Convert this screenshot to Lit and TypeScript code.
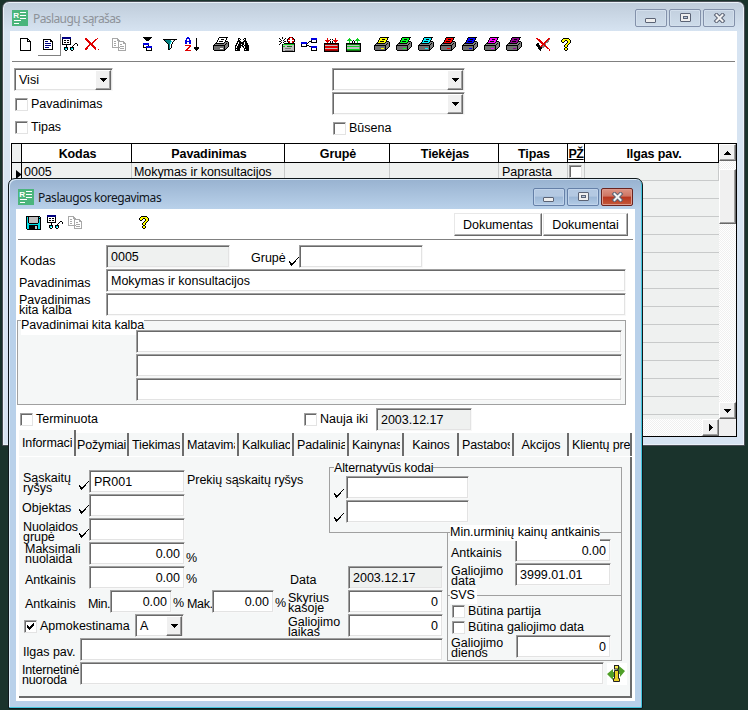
import { LitElement, html, css, svg, nothing } from "lit";
import { customElement, property } from "lit/decorators.js";

const PALETTE: Record<string, string> = {
  k: "#000000", w: "#ffffff", g: "#808080", s: "#c0c0c0", l: "#a8a8a8", n: "#000080", b: "#0000e0",
  r: "#e00000", d: "#900000", c: "#00e0e8", t: "#008080", y: "#ffff00", G: "#10d020", e: "#107010",
  a: "#707070",
};

const PRINTER = [
  "......kkkkkkkkk.",
  ".....kpppppppk..",
  ".....kppkkkppk..",
  "....kpppppppk...",
  "....kpkkkkppkkk.",
  "...kpppppppkgggk",
  "..kkkkkkkkkggkgk",
  ".kggggggggggkggk",
  "kkkkkkkkkkkkgggk",
  "kaaaaaaaaaakgggk",
  "kaaaaaaaaaakggk.",
  "kaaaaaapppakgk..",
  "kaaaaaaaaaakk...",
  ".kkkkkkkkkkk....",
];

const ICONS: Record<string, string[]> = {
  page: [
    "................",
    "kkkkkkkk........", "kwwwwwwkk.......", "kwwwwwwkwk......", "kwwwwwwkkkk.....", "kwwwwwwwwwk.....",
    "kwwwwwwwwwk.....", "kwwwwwwwwwk.....", "kwwwwwwwwwk.....", "kwwwwwwwwwk.....", "kwwwwwwwwwk.....",
    "kwwwwwwwwwk.....", "kwwwwwwwwwk.....", "kkkkkkkkkkk.....",
  ],
  list: [
    "................", "................",
    "kkkkkkkk........", "kwwwwwwkk.......", "kwnnnwwkkk......", "kwwwwwwwwk......", "kwnnnnnnwk......",
    "kwwwwwwwwk......", "kwnnnnnnwk......", "kwwwwwwwwk......", "kwnnnnwwwk......", "kwwwwwwwwk......", "kkkkkkkkkk......",
  ],
  view: [
    "nnnnnnnnn.......", "nnnnnnnnn.......", "kwwwwwwwk.......", "kwkkwkkwk.......", "kwwwwwwwk.......",
    "kwkkwkkwk.......", "kwwwwwwwk....kk.", "kkkkkkkkk...k..k", "....k......k...k", "....k.....k.....",
    "..kkkk..kkkk....", "..kcck..kcck....", "..kcwk..kcwk....", "...kk....kk.....",
  ],
  cross: [
    "................",
    "rr..........r...", "rrr.......rr....", ".rrr.....rr.....", "..rrr...rr......", "...rrr.rr.......", "....rrrr........",
    "....rrrr........", "...rr.rrr.......", "..rr...rrr......", ".rr.....rrr.....", "rrr......rr.....", "rr........r..r..",
  ],
  copy: [
    "................",
    "llllll..........", "lwwwwll.........", "lwwwwlll........", "lwllwwllllll....", "lwwwwwlwwwwll...", "lwllwwlwwwwlll..",
    "lwwwwwlwllwwwl..", "lwllwwlwwwwwwl..", "lwwwwwlwllllwl..", "llllllllwwwwwl..", "......lwllllwl..", "......lwwwwwwl..", "......llllllll..",
  ],
  copyTo: [
    "kkkkkkkkk.......", ".kkkkkkk........", "..kkkkk.........", "...kkk..........", "................", "................",
    "bbbbbb..........", "bbbbbb..........", "kwwwwk..........", "kwwbbbbbb.......", "kkkbbbbbb.......", "...kwwwwk.......", "...kwwwwk.......", "...kkkkkk.......",
  ],
  funnel: [
    "................", "................",
    "kkkkkkkkkkkkkk..", ".kttttttwwsk....", "..ktttttcwk.....", "...ktttcwk......", "....kttcwk......", ".....ktwk.......",
    ".....ktwk.......", ".....ktwk.......", ".....ktwk.......", ".....ktk........", ".....kk.........",
  ],
  sort: [
    "..bb............", ".bbbb......k....", ".b..b......k....", "bb..bb.....k....", "bbbbbb.....k....", "bb..bb.....k....", "bb..bb.....k....",
    "...........k....", "rrrrrr.....k....", "....rr.....k....", "...rr....kkkkk..", "..rr.....kkkkk..", ".rr.......kkk...", "rrrrrr.....k....",
  ],
  binoculars: [
    "................", "...kk....kk.....", "...kwk..kwk.....", "...kk....kk.....", "..kkkk..kkkk....", "..kwkkkkkwkk....",
    ".kkwkkkkkwkkk...", ".kwkkkwkkwkkk...", "kkwkkkkkwkkkkk..", "kwkkkk.kkwkkkk..", "kwkkkk..kwkkkk..", "kkkkk....kkkkk..", "kwkkk....kwkkk..", "kkkkk....kkkkk..",
  ],
  fresh: [
    "...k......krrk..", "k..k..k..krwwrk.", ".k...k..krrwwrrk", "..k.k...kwwwwwwk", "kk...kk.krrwwrrk", "..k.k....krwwrk.", ".k...kkkkkkkkkkk",
    "k..kGGGGGGGGGGGk", "...ksssssssssssk", "...kGGsseeeeessk", "...ksssssssssssk", "...kssggggggsssk", "...ksssssssssssk", "...kssggggggggsk", "...kkkkkkkkkkkkk",
  ],
  tree: [
    "................",
    "..........bbbbbb", "..........bbbbbb", "..........kwwwwk", "........kkkwwwwk", "bbbbbb.k..kkkkkk", "bbbbbbk.........",
    "kwwwwk..........", "kwwwwkkk........", "kkkkkk..kkbbbbbb", "..........bbbbbb", "..........kwwwwk", "..........kwwwwk", "..........kkkkkk",
  ],
  boxIn: [
    "................", "...r.......r....", "...r..k.k..r....", ".rrrrr...rrrrr..", "..rrr.k.k.rrr...", "...r..k.k..r....", "kkkkkkkkkkkkkkk.",
    "kdddddddddddddk.", "kssssssssssssgk.", "krrrrrrrrrrrrrk.", "krrrrrrrrrrrrrk.", "kssssssssssssgk.", "krrrrrrrrrrrrrk.", "kdddddddddddddk.", "kkkkkkkkkkkkkkk.",
  ],
  boxOut: [
    "................", "...G.......G....", "..GGG.....GGG...", ".GGGGG.k.GGGGG..", "...G..k.k..G....", "...G..k.k..G....", "kkkkkkkkkkkkkkk.",
    "keeeeeeeeeeeeek.", "kssssssssssssgk.", "kGGGGGGGGGGGGGk.", "kssssssssssssgk.", "kssssssssssssgk.", "kGGGGGGGGGGGGGk.", "keeeeeeeeeeeeek.", "kkkkkkkkkkkkkkk.",
  ],
  uncheck: [
    "................",
    "rr..........rr..", ".rrr.......rrg..", "..rrr.....rrg...", "...rrr...rrgg...", "....rrr.rrgg....", ".kk..rrrrg......",
    "kkk...rrrg......", "kkkk.rrgrr......", ".kkkrrgggrr.....", "..kkkkgg..rr....", "..kkkk.....rr...", "...kk........r..", "....k........r..",
  ],
  help: [
    "................",
    "..kkkkkk........", ".kyyyyyyk.......", "kyyykkyyyk......", "kyyk..kyyk......", ".kk...kyyk......", ".....kyyk.......",
    "....kyyk........", "...kyyk.........", "...kyyk.........", "....kk..........", "...kyyk.........", "...kyyk.........", "....kk..........",
  ],
  save: [
    "................",
    "kkkkkkkkkkkkkk..", "kckssssssssskck.", "kckssssssssskkk.", "kckssssssssskck.", "kckssssssssskck.", "kckssssssssskck.", "kckssssssssskck.",
    "kcckkkkkkkkkcck.", "kccccccccccccck.", "kcckkkkkkkkkcck.", "kcckkkkkksskcck.", "kcckkkkkksskcck.", "kcckkkkkksskcck.", ".kkkkkkkkkkkkkk.",
  ],
  tick: [
    ".........k", "........k.", ".......k..", "......k...", "k....kk...", "kk..kk....", ".kkkk.....", ".kkk......", "..k.......",
  ],
};

function pixels(rows: string[], ink = "") {
  const out: unknown[] = [];
  rows.forEach((row, y) => {
    let x = 0;
    while (x < row.length) {
      let end = x + 1;
      while (end < row.length && row[end] === row[x]) end++;
      if (row[x] !== ".") {
        const fill = row[x] === "p" ? ink : PALETTE[row[x]];
        out.push(svg`<rect x=${x} y=${y} width=${end - x} height="1" fill=${fill}></rect>`);
      }
      x = end;
    }
  });
  return out;
}

@customElement("pixel-icon")
class PixelIcon extends LitElement {
  @property() name = "page";
  @property() ink = "";
  static styles = css`
    :host { display: block; flex: none; width: 16px; height: 16px; }
    :host([name="tick"]) { width: 10px; height: 9px; }
    svg { display: block; }
  `;
  render() {
    const rows = this.name === "printer" ? PRINTER : ICONS[this.name];
    const w = this.name === "tick" ? 10 : 16;
    const h = this.name === "tick" ? 9 : 16;
    return html`<svg width=${w} height=${h} viewBox="0 0 ${w} ${h}" shape-rendering="crispEdges">${pixels(rows, this.ink)}</svg>`;
  }
}

@customElement("title-bar")
class TitleBar extends LitElement {
  @property() label = "";
  @property({ type: Boolean, reflect: true }) active = false;
  static styles = css`
    :host { display: flex; flex: none; height: 29px; }
    .logo { margin: 8px 0 0 2px; width: 16px; height: 16px; flex: none; display: block; }
    .name { margin: 9px 0 0 5px; flex: 1; font: 12px/16px "Noto Sans", sans-serif; letter-spacing: -0.6px; color: #8d9299; white-space: nowrap; }
    .buttons { display: flex; gap: 2px; margin: 7px 2px 0 0; }
    .btn { box-sizing: border-box; width: 32px; height: 18px; border: 1px solid #8391aa; border-radius: 2px; box-shadow: inset 0 0 0 1px #d3dfec; display: grid; place-items: center; background: linear-gradient(#c3d0df, #cedcea); }
    :host([active]) .name { color: #10151c; letter-spacing: -0.45px; margin-left: 4px; }
    :host([active]) .logo { margin-top: 9px; }
    :host([active]) .name { margin-top: 10px; }
    :host([active]) .buttons { margin-top: 8px; }
    :host([active]) .btn { border-color: #6580a8; box-shadow: inset 0 0 0 1px #c0d3ea; background: linear-gradient(#b4c9e2 45%, #9cb7d6 50%, #b4cce6); }
    :host([active]) .close { border-color: #6b2420; box-shadow: inset 0 0 0 1px #dd9a8c; background: linear-gradient(#dc9384 0, #cf7563 45%, #b8351f 50%, #c45a3a); }
    svg { display: block; }
  `;
  render() {
    return html`
      <svg class="logo" viewBox="0 0 16 16">
        <rect width="16" height="16" fill="#4bb57c"></rect>
        <text x="1.3" y="8" fill="#fff" font-family="Liberation Sans, sans-serif" font-weight="bold" font-size="8">R</text>
        <path d="M8 2.5h6M8 5.5h6M8 8.500h6M2 10.5h7M2 13.5h5" stroke="#fff" stroke-width="1"></path>
      </svg>
      <span class="name">${this.label}</span>
      <div class="buttons">
        <span class="btn"><svg width="12" height="12"><rect x="0.5" y="6.5" width="10" height="4" rx="0.5" fill="#eee" stroke="#5b6375"></rect></svg></span>
        <span class="btn"><svg width="12" height="10"><rect x="1.5" y="0.5" width="10" height="8" rx="0.5" fill="#eee" stroke="#5b6375"></rect><rect x="4.500" y="3.5" width="4" height="2" fill="#b8c8dc" stroke="#5b6375"></rect></svg></span>
        <span class="btn close"><svg width="13" height="10"><path d="M3.500 2l6 6M9.500 2l-6 6" stroke="#5b6375" stroke-width="4" stroke-linecap="square"></path><path d="M3.500 2l6 6M9.500 2l-6 6" stroke="#f2f2f2" stroke-width="2" stroke-linecap="square"></path></svg></span>
      </div>
    `;
  }
}

const PRINTER_INKS = ["#ffff00", "#00ff20", "#00f0ff", "#ff0000", "#0000ff", "#ff00ff", "#900090"];
const COLUMNS = ["Kodas", "Pavadinimas", "Grupė", "Tiekėjas", "Tipas", "PŽ", "Ilgas pav."];
const FIRST_ROW = ["0005", "Mokymas ir konsultacijos", "", "", "Paprasta", "box", ""];
const TABS = ["Informaci", "Požymiai", "Tiekimas", "Matavimai", "Kalkuliacija", "Padaliniai", "Kainynas", "Kainos", "Pastabos", "Akcijos", "Klientų pre"];
const CENTERED = new Set(["Kainos", "Akcijos"]);

@customElement("app-root")
class AppRoot extends LitElement {
  static styles = css`
    :host { display: block; position: relative; width: 748px; height: 710px; overflow: hidden; background: #1a332c; font: 12.5px/14px "Liberation Sans", Arial, sans-serif; color: #000; }
    * { box-sizing: border-box; }
    .window { position: absolute; display: flex; flex-direction: column; }
    .back { left: 2px; top: 1px; width: 743px; height: 445px; padding: 0 7px 8px; border: 1px solid #4a4f56; border-radius: 7px 7px 0 0; background: linear-gradient(#bfccda, #d7e4f2 30px); box-shadow: inset 0 0 0 1px #eaf1f8; }
    .front { left: 8px; top: 178px; width: 635px; height: 531px; padding: 1px 7px 7px; border: 1px solid #10181c; border-radius: 7px 7px 2px 2px; background: linear-gradient(#98b2d0, #b9d1ea 30px); box-shadow: inset -1px -1px 0 #42c6dc, inset 1px 1px 0 #dcebf8; }
    .client { flex: 1; min-height: 0; background: #fff; display: flex; flex-direction: column; }
    .bar { display: flex; height: 31px; flex: none; margin: 0 2px; border-bottom: 1px solid #808080; padding-top: 6px; }
    .s8 { margin-left: 8px; } .s5 { margin-left: 5px; }
    .gap { flex: 1; }

    .field { display: block; flex: none; height: 23px; background: #fff; padding: 4px 4px 0 4px; border: 1px solid; border-color: #a0a0a0 #f8f8f8 #f8f8f8 #a0a0a0; box-shadow: inset 1px 1px 0 #696969, inset -1px -1px 0 #e3e3e3; white-space: nowrap; }
    .gray { background: #eff1f0; }
    .num { text-align: right; }
    .combo { display: flex; justify-content: space-between; padding: 2px 1px 0 4px; }
    .combo .txt { margin-top: 2px; }
    .arrow { width: 16px; height: 20px; flex: none; margin-top: -1px; background: #f0f0f0; border: 1px solid; border-color: #fff #696969 #696969 #fff; box-shadow: inset -1px -1px 0 #a0a0a0; display: grid; place-items: center; }
    .arrow svg { display: block; }
    .check { display: flex; align-items: center; gap: 3px; height: 14px; white-space: nowrap; }
    .box { width: 13px; height: 13px; flex: none; background: #fff; border: 1px solid; border-color: #a0a0a0 #e3e3e3 #e3e3e3 #a0a0a0; box-shadow: inset 1px 1px 0 #696969; display: block; }

    .filters { display: flex; margin: 6px 0 0 4px; height: 75px; flex: none; }
    .fl { width: 318px; }
    .fl .combo { width: 99px; margin-bottom: 6px; }
    .fl .check { margin: 0 0 9px 1px; }
    .fr .combo { width: 133px; margin-bottom: 1px; }
    .fr .check { margin: 6px 0 0 1px; }

    .table { flex: 1; min-height: 0; margin: 0 0 0 1px; display: flex; border: 1px solid #000; }
    .grid { flex: 1; min-width: 0; display: flex; flex-direction: column; background: #eff1f0; }
    .tr { display: grid; flex: none; grid-template-columns: 10px 110px 153px 105px 109px 69px 17px 1fr; height: 18px; border-bottom: 1px solid #c8caca; }
    .tr span { border-right: 1px solid #c8caca; overflow: hidden; white-space: nowrap; padding: 2px 0 0 2px; line-height: 14px; }
    .td span:nth-child(3) { letter-spacing: -0.06px; }
    .td span:nth-child(6) { padding-left: 3px; }
    .th { height: 19px; border-color: #000; font-weight: bold; letter-spacing: -0.1px; }
    .th span { background: #fff; border-color: #000; text-align: center; padding: 3px 0 0 2px; }
    .th span:nth-child(8) { padding-left: 5px; }
    .th span:first-child { background: #eff1f0; }
    .th span:nth-child(7) { text-decoration: underline; letter-spacing: -0.4px; padding-left: 0; }
    .td span:first-child { border-color: #000; padding: 5px 0 0 4px; }
    .tr .pick { padding: 2px 0 0 1px; }
    .rows { flex: 1; background: repeating-linear-gradient(transparent 0 17px, #c8caca 17px 18px); }
    .hscroll { height: 17px; display: flex; justify-content: flex-end; }
    .hscroll .arrow, .vscroll .arrow { width: 17px; height: 17px; margin: 0; }
    .track { background: repeating-conic-gradient(#f0f0f0 0 25%, #fff 0 50%) 0 0 / 2px 2px; }
    .vscroll { width: 17px; display: flex; flex-direction: column; }
    .thumb { height: 55px; margin-top: 8px; background: #f0f0f0; border: 1px solid; border-color: #fff #696969 #696969 #fff; box-shadow: inset -1px -1px 0 #a0a0a0; }
    .vfill { flex: 1; }
    .corner { height: 17px; background: #f0f0f0; }

    .line { display: flex; height: 24px; flex: none; }
    .lab { flex: none; white-space: nowrap; line-height: 10px; padding-top: 9px; }
    .two { padding-top: 2px; }
    .form { padding-top: 5px; }
    .form .lab { padding-left: 3px; width: 90px; }
    .form .k { padding: 11px 0 0 4px; }
    .form .grp { padding: 8px 0 0 21px; width: 59px; }
    .w124 { width: 124px; }
    .grow { flex: 1; }
    .form .grow { margin-right: 9px; }
    .tick { margin: 12px 0 0; }
    .left .tick { margin-top: 11px; }
    .group { border: 1px solid #a0a0a0; background: #f5f7f7; }
    .legend { display: block; width: fit-content; background: #fff; height: 16px; line-height: 14px; white-space: nowrap; }
    .names { margin: 3px 9px 0 1px; height: 85px; padding-left: 118px; flex: none; position: relative; padding-top: 9px; }
    .names .legend { position: absolute; left: 3px; top: -4px; height: 18px; padding-top: 1px; letter-spacing: -0.06px; }
    .names .field { width: 486px; margin-bottom: 1px; position: relative; }
    .flags { display: flex; align-items: center; height: 24px; padding-left: 4px; flex: none; margin-top: 2px; }
    .flags .check:first-child { width: 284px; }
    .flags .field { width: 96px; margin-left: 8px; }

    .tabs { display: flex; margin-left: 3px; height: 26px; flex: none; align-items: flex-end; border-bottom: 1px solid #fff; letter-spacing: -0.12px; }
    .tab { width: 55px; height: 23px; background: #f5f7f7; border-right: 2px solid #6c6c6c; overflow: hidden; white-space: nowrap; padding: 5px 2px 0 3px; flex: none; }
    .tab .clip { display: block; overflow: hidden; }
    .tab:first-child { width: 57px; height: 26px; padding-top: 6px; }
    .tab:nth-child(2) { width: 53px; padding: 5px 0 0 1px; letter-spacing: -0.2px; }
    .tab:last-child { width: 63px; padding-right: 0; }
    .mid { text-align: center; }

    .panel { margin-left: 3px; width: 613px; height: 241px; background: #f5f7f7; border: solid #6c6c6c; border-width: 0 2px 2px 0; display: grid; grid-template-columns: 269px 159px 175px; grid-template-rows: 76px 33px 72px 24px 24px; flex: none; }
    .left { grid-area: 1 / 1 / 4 / 2; padding-top: 13px; }
    .left .lab { width: 60px; padding-left: 4px; }
    .left .acc { padding-top: 3px; }
    .left .disc { padding-top: 4px; letter-spacing: -0.06px; }
    .left .max { padding-left: 6px; width: 70px; }
    .left .o { padding-left: 3px; }
    .w96 { width: 96px; } .w95 { width: 95px; } .w62 { width: 62px; }
    .left .note { width: auto; padding: 5px 0 0 2px; line-height: 10px; letter-spacing: -0.06px; }
    .left .pct { width: auto; padding: 11px 0 0 1px; }
    .left .pct8 { padding-top: 8px; width: 12px; letter-spacing: -0.5px; }
    .left .min { width: 21px; padding: 9px 0 0; letter-spacing: -0.35px; margin-left: -1px; width: 22px; }
    .left .mak { width: 26px; padding: 9px 0 0 1px; margin-left: 2px; letter-spacing: -0.35px; }
    .left .check { margin: 5px 0 0 5px; width: 111px; gap: 3px; }
    .left .combo { width: 49px; }
    .alt { grid-area: 1 / 2 / 2 / 4; margin: 10px 0 0 41px; position: relative; padding: 8px 0 0 4px; }
    .alt .legend { position: absolute; left: 4px; top: -7px; background: #f8fafa; height: 14px; letter-spacing: -0.15px; }
    .alt .field { width: 123px; margin-left: 2px; position: relative; }
    .alt .tick { margin-top: 13px; }
    .dates { grid-area: 3 / 2 / 4 / 3; }
    .dates .lab { width: 60px; }
    .dates .d { padding-left: 2px; }
    .dates .two { padding-top: 3px; }
    .dates .field { width: 95px; }
    .urm { grid-area: 2 / 3 / 5 / 4; margin: -1px 0 2px; height: 129px; position: relative; padding: 6px 0 0 3px; }
    .urm .legend { position: absolute; left: 2px; top: -8px; letter-spacing: -0.03px; }
    .urm .lab { width: 64px; }
    .urm .two { padding-top: 3px; }
    .svs { border-top: 1px solid #a0a0a0; margin: 8px 0 0 -3px; height: 8px; position: relative; }
    .svs .legend { padding-right: 2px; }
    .urm .check { height: 16px; margin-left: 1px; }
    .urm .late .lab { width: 65px; }
    .ilgas { grid-area: 4 / 1 / 5 / 3; margin-right: 4px; }
    .url { grid-area: 5 / 1 / 6 / 4; }
    .ilgas .lab, .url .lab { width: 61px; padding-left: 4px; }
    .url .lab { padding: 3px 0 0 3px; letter-spacing: -0.15px; }
    .url .field { margin-right: 3px; }
    .info { width: 20px; height: 22px; margin-right: -5px; background: #fff; flex: none; margin-top: 1px; }
  `;

  private arrow(dir = "down") {
    const d = { down: "M0 0h7v1h-1v1h-1v1h-1v1h-1v-1h-1v-1h-1v-1h-1z", up: "M3 0h1v1h1v1h1v1h1v1h-7v-1h1v-1h1v-1h1z", right: "M0 0h1v1h1v1h1v1h1v1h-1v1h-1v1h-1v1h-1z" }[dir];
    const side = dir === "right";
    return html`<span class="arrow"><svg width="7" height=${side ? 7 : 4} shape-rendering="crispEdges"><path transform=${side ? "translate(2 0)" : "translate(0 0)"} d=${d!}></path></svg></span>`;
  }
  private combo(text = "") {
    return html`<span class="field combo"><span class="txt">${text}</span>${this.arrow()}</span>`;
  }
  private check(text: string, on = false) {
    return html`<label class="check"><span class="box">${on ? html`<svg width="11" height="11" shape-rendering="crispEdges"><path d="M2 4h1v1h1v1h1v-1h1v-1h1v-1h1v-1h1v3h-1v1h-1v1h-1v1h-1v1h-1v-1h-1v-1h-1z"></path></svg>` : nothing}</span>${text}</label>`;
  }
  private tick() {
    return html`<pixel-icon class="tick" name="tick"></pixel-icon>`;
  }

  render() {
    const icon = (name: string, cls = "") => html`<pixel-icon class=${cls} name=${name}></pixel-icon>`;
    return html`
      <section class="window back">
        <title-bar label="Paslaugų sąrašas"></title-bar>
        <div class="client">
          <div class="bar"><tool-strip></tool-strip></div>
          <div class="filters">
            <div class="fl">${this.combo("Visi")}${this.check("Pavadinimas")}${this.check("Tipas")}</div>
            <div class="fr">${this.combo()}${this.combo()}${this.check("Būsena")}</div>
          </div>
          <div class="table">
            <div class="grid">
              <div class="tr th"><span></span>${COLUMNS.map((c) => html`<span>${c}</span>`)}</div>
              <div class="tr td">
                <span><svg width="6" height="9"><path d="M0 0l5.5 4.5L0 9z"></path></svg></span>
                ${FIRST_ROW.map((c) => (c === "box" ? html`<span class="pick"><i class="box"></i></span>` : html`<span>${c}</span>`))}
              </div>
              <div class="rows"></div>
              <div class="hscroll track">${this.arrow("right")}</div>
            </div>
            <div class="vscroll track">
              ${this.arrow("up")}<div class="thumb"></div><div class="vfill"></div>${this.arrow()}<div class="corner"></div>
            </div>
          </div>
        </div>
      </section>

      <section class="window front">
        <title-bar active label="Paslaugos koregavimas"></title-bar>
        <div class="client">
          <div class="bar">
            ${icon("save", "s8")}${icon("view", "s5")}${icon("copy", "s5")}
            <span class="gap"></span>
            ${icon("help")}
            <button-pair></button-pair>
          </div>
          <div class="form">
            <div class="line"><span class="lab k">Kodas</span><span class="field gray w124">0005</span><span class="lab grp">Grupė</span>${this.tick()}<span class="field w124"></span></div>
            <div class="line"><span class="lab">Pavadinimas</span><span class="field grow">Mokymas ir konsultacijos</span></div>
            <div class="line"><span class="lab two">Pavadinimas<br />kita kalba</span><span class="field grow"></span></div>
          </div>
          <div class="group names">
            <span class="legend">Pavadinimai kita kalba</span>
            <span class="field"></span><span class="field"></span><span class="field"></span>
          </div>
          <div class="flags">${this.check("Terminuota")}${this.check("Nauja iki")}<span class="field gray">2003.12.17</span></div>
          <div class="tabs">
            ${TABS.map((t) => html`<span class="tab ${CENTERED.has(t) ? "mid" : ""}"><span class="clip">${t}</span></span>`)}
          </div>
          <div class="panel">
            <div class="left">
              <div class="line"><span class="lab acc">Sąskaitų<br />ryšys</span>${this.tick()}<span class="field w96">PR001</span><span class="lab note">Prekių sąskaitų ryšys</span></div>
              <div class="line"><span class="lab o">Objektas</span>${this.tick()}<span class="field w96"></span></div>
              <div class="line"><span class="lab disc">Nuolaidos<br />grupė</span>${this.tick()}<span class="field w96"></span></div>
              <div class="line"><span class="lab two max">Maksimali<br />nuolaida</span><span class="field num w96">0.00</span><span class="lab pct">%</span></div>
              <div class="line"><span class="lab max">Antkainis</span><span class="field num w96">0.00</span><span class="lab pct pct8">%</span></div>
              <div class="line"><span class="lab max">Antkainis</span><span class="lab min">Min.</span><span class="field num w62">0.00</span><span class="lab pct pct8">%</span><span class="lab mak">Mak.</span><span class="field num w62">0.00</span><span class="lab pct pct8">%</span></div>
              <div class="line">${this.check("Apmokestinama", true)}${this.combo("A")}</div>
            </div>
            <div class="group alt">
              <span class="legend">Alternatyvūs kodai</span>
              <div class="line">${this.tick()}<span class="field"></span></div>
              <div class="line">${this.tick()}<span class="field"></span></div>
            </div>
            <div class="dates">
              <div class="line"><span class="lab d">Data</span><span class="field gray">2003.12.17</span></div>
              <div class="line"><span class="lab two">Skyrius<br />kasoje</span><span class="field num">0</span></div>
              <div class="line"><span class="lab two">Galiojimo<br />laikas</span><span class="field num">0</span></div>
            </div>
            <div class="group urm">
              <span class="legend">Min.urminių kainų antkainis</span>
              <div class="line"><span class="lab">Antkainis</span><span class="field num w96">0.00</span></div>
              <div class="line"><span class="lab two">Galiojimo<br />data</span><span class="field w96">3999.01.01</span></div>
              <div class="svs"><span class="legend">SVS</span></div>
              ${this.check("Būtina partija")}${this.check("Būtina galiojimo data")}
              <div class="line late"><span class="lab two">Galiojimo<br />dienos</span><span class="field num w95">0</span></div>
            </div>
            <div class="line ilgas"><span class="lab">Ilgas pav.</span><span class="field grow"></span></div>
            <div class="line url"><span class="lab two">Internetinė<br />nuoroda</span><span class="field grow"></span>
              <svg class="info" viewBox="0 0 20 22"><path d="M0 11l6-5v3h3v5h-3v3zM18 8l-6-5v3h-2v5h3v3z" fill="#4f9f28"></path><path d="M7.500 7.500h4v8h1v3h-6v-3h1z" fill="#e8cf28" stroke="#222"></path><rect x="7.500" y="2.500" width="4" height="3.500" fill="#f6ea50" stroke="#222"></rect></svg>
            </div>
          </div>
        </div>
      </section>
    `;
  }
}

/* Toolbar of the list window: every entry carries the space that precedes it. */
const TOOLS: [string, number, string?][] = [
  ["page", 8], ["list", 0], ["view", 0], ["cross", 7], ["copy", 11], ["copyTo", 15], ["funnel", 4], ["sort", 6],
  ["printer", 12, "#ffffff"], ["binoculars", 6], ["fresh", 28], ["tree", 6], ["boxIn", 7], ["boxOut", 6],
  ...PRINTER_INKS.map((ink, i): [string, number, string] => ["printer", i ? 6 : 12, ink]),
  ["uncheck", 14], ["help", 9],
];

@customElement("tool-strip")
class ToolStrip extends LitElement {
  static styles = css`
    :host { display: flex; }
    .pressed { width: 23px; height: 22px; margin: -3px 1px 0 2px; padding: 3px 0 0 5px; border-right: 1px solid #808080; border-bottom: 1px solid #808080; flex: none; box-sizing: border-box; }
  `;
  render() {
    return TOOLS.map(([name, gap, ink]) =>
      name === "list"
        ? html`<span class="pressed"><pixel-icon name="list"></pixel-icon></span>`
        : html`<pixel-icon style="margin-left:${gap}px" name=${name} ink=${ink ?? ""}></pixel-icon>`,
    );
  }
}

@customElement("button-pair")
class ButtonPair extends LitElement {
  static styles = css`
    :host { display: flex; flex: none; margin: -2px 5px 0 299px; gap: 1px; }
    span { box-sizing: border-box; height: 23px; width: 88px; background: #fff; border: 1px solid; border-color: #e8e8e8 #696969 #696969 #e8e8e8; box-shadow: inset -1px -1px 0 #b0b0b0; text-align: center; line-height: 22px; white-space: nowrap; }
    span:last-child { width: 85px; }
  `;
  render() {
    return html`<span>Dokumentas</span><span>Dokumentai</span>`;
  }
}
